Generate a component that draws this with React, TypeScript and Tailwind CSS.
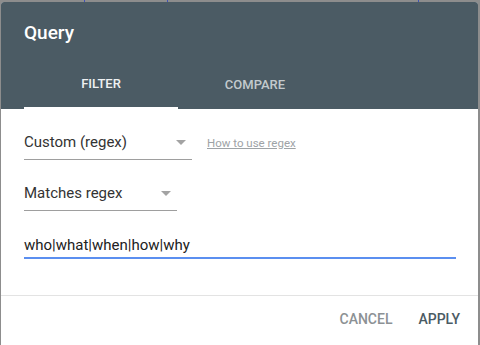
function Caret({ className = "" }: { className?: string }) {
  return (
    <svg width="10" height="5" viewBox="0 0 10 5" className={className}>
      <path d="M0 0 L10 0 L5 5 Z" fill="#a3a3a3" />
    </svg>
  );
}

function Select({ label, width, caretRight }: { label: string; width: string; caretRight: string }) {
  return (
    <div className={`flex items-center justify-between border-b border-[#9e9e9e] pb-[7px] ${width}`}>
      <span className="text-[15px] leading-5 text-[#333]">{label}</span>
      <Caret className={caretRight} />
    </div>
  );
}

export default function App() {
  return (
    <div
      className="relative w-[480px] h-[345px] overflow-hidden bg-[#8d8d8d] pt-[2px] pl-[1px] pr-[2px]"
      style={{ fontFamily: "Roboto, 'Liberation Sans', sans-serif" }}
    >
      {/* bits of the page behind the dialog */}
      <div className="absolute top-0 left-[84px] w-px h-[2px] bg-[#3f51b5]" />
      <div className="absolute top-0 left-[167px] w-px h-[2px] bg-[#3f51b5]" />
      <div className="absolute top-0 left-[418px] w-px h-[2px] bg-[#3f51b5]" />

      <div className="h-full bg-white rounded-t-[3px] overflow-hidden flex flex-col">
        {/* Header */}
        <div className="bg-[#4b5b64] pt-[19px]">
          <h1 className="pl-[23px] text-[19px] leading-6 font-medium text-white">Query</h1>
          <div className="flex ml-[23px] mt-[16px]">
            <div className="w-[154px] h-12 flex flex-col">
              <div className="flex-1 flex items-center justify-center text-[13px] font-medium text-[#eef1f2]">
                FILTER
              </div>
              <div className="h-[2px] bg-white" />
            </div>
            <div className="w-[154px] h-12 flex items-center justify-center text-[13px] font-medium text-[#c3cacd]">
              COMPARE
            </div>
          </div>
        </div>

        {/* Body */}
        <div className="pl-[23px] pr-6 pt-[23px] flex flex-col">
          <div className="flex items-start">
            <Select label="Custom (regex)" width="w-[168px]" caretRight="mr-[6px]" />
            <a className="ml-[15px] mt-[5px] text-[11.5px] leading-3 text-[#9ea3a6] underline">How to use regex</a>
          </div>
          <div className="mt-[23px]">
            <Select label="Matches regex" width="w-[153px]" caretRight="mr-[6px]" />
          </div>
          <div className="mt-[22px] w-[432px] border-b-2 border-[#5b8ff0]">
            <span className="text-[15px] leading-5 text-[#212121]">who|what|when|how|why</span>
          </div>
        </div>

        <div className="mt-[36px] border-t border-[#e3e3e3]" />

        {/* Footer */}
        <div className="flex justify-end items-center gap-[26px] pr-[18px] pt-[13px]">
          <button className="text-[14px] font-medium text-[#8c9194]">CANCEL</button>
          <button className="text-[14px] font-medium text-[#4b5b64]">APPLY</button>
        </div>
      </div>
    </div>
  );
}
